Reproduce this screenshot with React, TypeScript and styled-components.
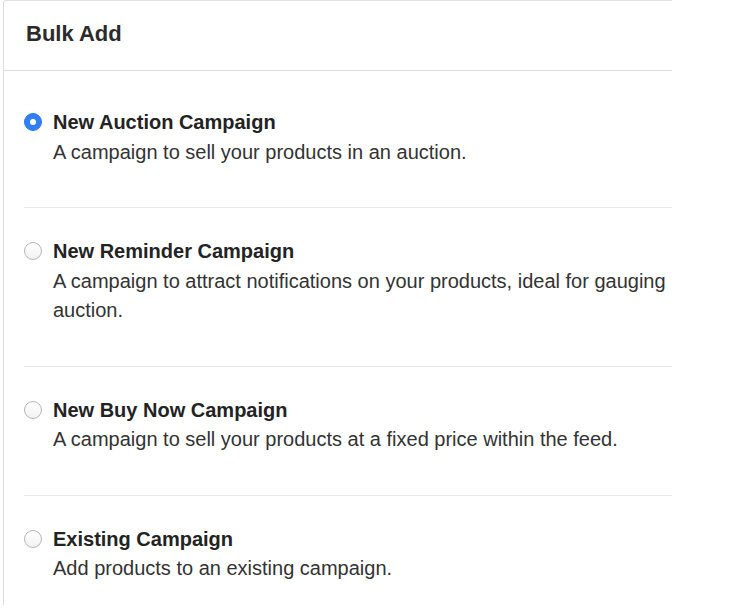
import styled, { createGlobalStyle } from "styled-components";

const GlobalStyle = createGlobalStyle`
  body {
    margin: 0;
    background: #ffffff;
    font-family: "Liberation Sans", Arial, Helvetica, sans-serif;
  }
`;

type Option = {
  id: string;
  title: string;
  lines: string[];
};

const options: Option[] = [
  {
    id: "auction",
    title: "New Auction Campaign",
    lines: ["A campaign to sell your products in an auction."],
  },
  {
    id: "reminder",
    title: "New Reminder Campaign",
    lines: [
      "A campaign to attract notifications on your products, ideal for gauging",
      "auction.",
    ],
  },
  {
    id: "buynow",
    title: "New Buy Now Campaign",
    lines: ["A campaign to sell your products at a fixed price within the feed."],
  },
  {
    id: "existing",
    title: "Existing Campaign",
    lines: ["Add products to an existing campaign."],
  },
];

const App = () => {
  const selected = "auction";

  return (
    <>
      <GlobalStyle />
      <Panel>
        <Header>
          <HeaderTitle>Bulk Add</HeaderTitle>
        </Header>
        <OptionList>
          {options.map((opt) => (
            <OptionRow key={opt.id}>
              <RadioDot $checked={opt.id === selected} />
              <OptionText>
                <OptionTitle>{opt.title}</OptionTitle>
                <OptionDesc>
                  {opt.lines.map((l) => (
                    <span key={l}>{l}</span>
                  ))}
                </OptionDesc>
              </OptionText>
            </OptionRow>
          ))}
        </OptionList>
      </Panel>
    </>
  );
};

const Panel = styled.div`
  margin-left: 3px;
  width: 669px;
  height: 605px;
  overflow: hidden;
  border-left: 1px solid #dcdcdc;
  border-top: 1px solid #e2e2e2;
  border-top-left-radius: 3px;
  background: #ffffff;
  box-sizing: border-box;
`;

const Header = styled.div`
  height: 70px;
  box-sizing: border-box;
  padding: 18px 22px 0;
  border-bottom: 1px solid #dddddd;
`;

const HeaderTitle = styled.div`
  font-size: 22px;
  line-height: 30px;
  font-weight: 700;
  color: #2b2b2b;
`;

const OptionList = styled.div`
  display: flex;
  flex-direction: column;
  width: 689px;
  margin-left: 20px;
  padding-top: 8px;
`;

const OptionRow = styled.div`
  display: flex;
  align-items: flex-start;
  gap: 11px;
  padding: 29px 0 40px;
  border-bottom: 1px solid #e8e8e8;

  &:last-child {
    border-bottom: none;
  }
`;

const RadioDot = styled.span<{ $checked: boolean }>`
  flex: none;
  width: 18px;
  height: 18px;
  margin-top: 5px;
  border-radius: 50%;
  box-sizing: border-box;
  display: flex;
  align-items: center;
  justify-content: center;
  background: ${(p) =>
    p.$checked ? "#2f80f5" : "linear-gradient(#ffffff, #f2f2f2)"};
  border: 1px solid ${(p) => (p.$checked ? "#2a78ec" : "#b5b5b5")};

  &::after {
    content: "";
    display: ${(p) => (p.$checked ? "block" : "none")};
    width: 6px;
    height: 6px;
    border-radius: 50%;
    background: #ffffff;
  }
`;

const OptionText = styled.div`
  width: 660px;
  display: flex;
  flex-direction: column;
`;

const OptionTitle = styled.div`
  font-size: 20px;
  line-height: 29.5px;
  font-weight: 700;
  color: #232323;
`;

const OptionDesc = styled.div`
  display: flex;
  flex-direction: column;
  font-size: 20px;
  line-height: 29.5px;
  color: #333333;
  white-space: nowrap;
`;

export default App;
